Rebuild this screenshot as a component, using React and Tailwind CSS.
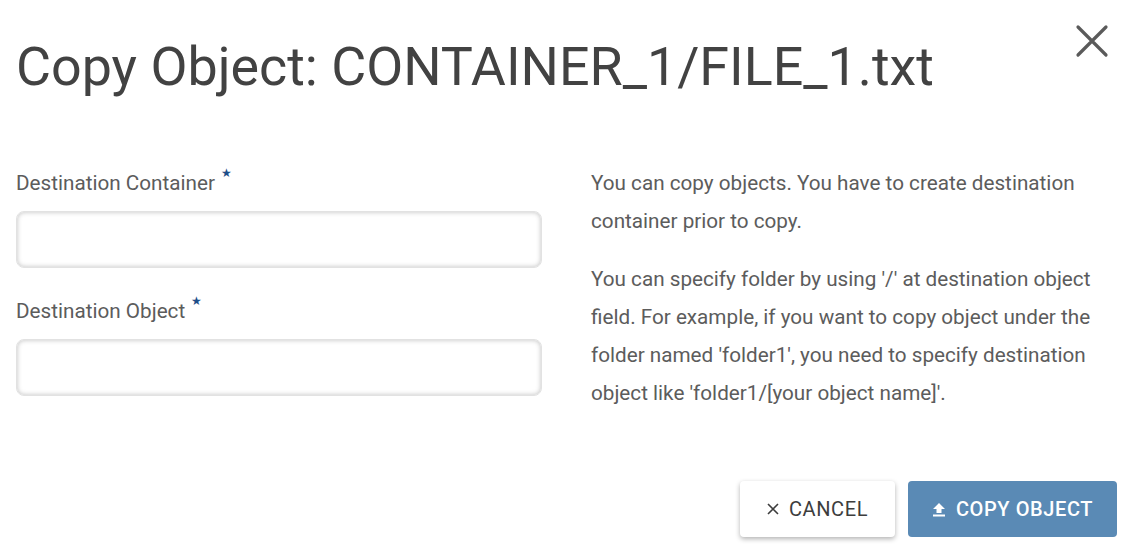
import React from "react";

export default function App() {
  return (
    <div className="w-[1135px] h-[558px] bg-white overflow-hidden relative" style={{ fontFamily: "Roboto, sans-serif" }}>
      <button className="absolute right-[26px] top-[24px] w-[34px] h-[34px] flex items-center justify-center">
        <svg width="34" height="34" viewBox="0 0 34 34" fill="none" stroke="#5a5a5a" strokeWidth="3.2" strokeLinecap="round">
          <path d="M3 3 L31 31 M31 3 L3 31" />
        </svg>
      </button>
      <div className="pl-[16px] pr-[18px]">
        <h1 className="pt-[34px] text-[53.8px] leading-[66px] text-[#424242] font-normal">
          Copy Object: CONTAINER_1/FILE_1.txt
        </h1>
        <div className="grid grid-cols-2 gap-x-[49px] mt-[71px]">
          <div className="flex flex-col">
            <label className="text-[20.7px] leading-[24px] text-[#5c5c5c] flex">
              Destination Container
              <span className="text-[#1d4e89] text-[12px] leading-[12px] ml-[6px] -mt-[4px]">★</span>
            </label>
            <div className="mt-[16px] h-[57px] rounded-[8px] border border-[#e2e2e2] shadow-[inset_0_0_5px_rgba(0,0,0,0.25)]" />
            <label className="text-[20.7px] leading-[24px] text-[#5c5c5c] mt-[31px] flex">
              Destination Object
              <span className="text-[#1d4e89] text-[12px] leading-[12px] ml-[6px] -mt-[4px]">★</span>
            </label>
            <div className="mt-[16px] h-[57px] rounded-[8px] border border-[#e2e2e2] shadow-[inset_0_0_5px_rgba(0,0,0,0.25)]" />
          </div>
          <div className="text-[20.7px] leading-[38px] text-[#5c5c5c] -mt-[7px]">
            <p>You can copy objects. You have to create destination container prior to copy.</p>
            <p className="mt-[20px]">
              You can specify folder by using '/' at destination object field. For example, if you want to copy object under the folder named 'folder1', you need to specify destination object like 'folder1/[your object name]'.
            </p>
          </div>
        </div>
        <div className="flex justify-end gap-[13px] mt-[69px]">
          <button className="w-[155px] h-[56px] bg-white rounded-[4px] shadow-[0_2px_5px_rgba(0,0,0,0.3)] flex items-center justify-center gap-[10px] text-[20px] text-[#3d3d3d] tracking-[0.6px]">
            <svg width="12" height="12" viewBox="0 0 12 12" stroke="#3d3d3d" strokeWidth="1.6">
              <path d="M1 1 L11 11 M11 1 L1 11" />
            </svg>
            CANCEL
          </button>
          <button className="w-[209px] h-[56px] bg-[#5a8ab5] rounded-[4px] flex items-center justify-center gap-[10px] text-[20px] text-white font-medium tracking-[0.6px]">
            <svg width="14" height="16" viewBox="0 0 14 16" fill="white">
              <path d="M1 8 L7 2 L13 8 H9.5 V12 H4.5 V8 Z M1 13.5 H13 V15.5 H1 Z" />
            </svg>
            COPY OBJECT
          </button>
        </div>
      </div>
    </div>
  );
}
